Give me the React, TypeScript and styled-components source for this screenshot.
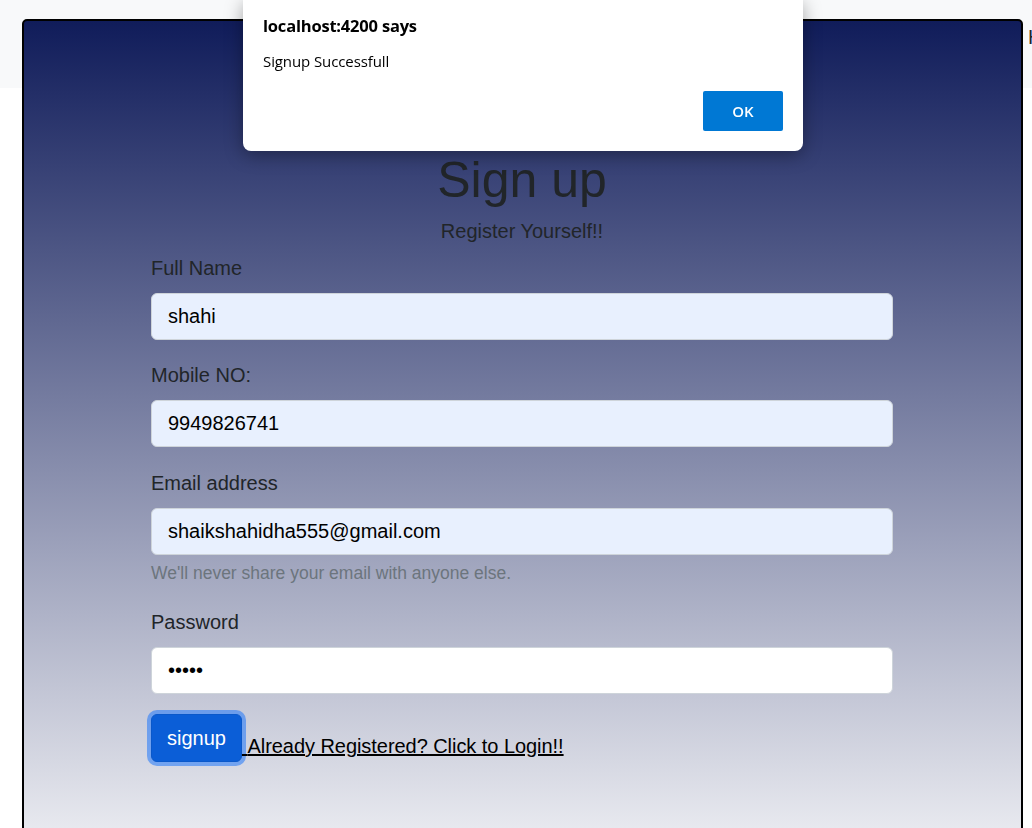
import React, { useState } from 'react';
import styled, { createGlobalStyle } from 'styled-components';

const GlobalStyle = createGlobalStyle`
  html, body {
    margin: 0;
    padding: 0;
  }
  body {
    font-family: "Liberation Sans", Arial, sans-serif;
    color: #212529;
    background: #fff;
  }
  * {
    box-sizing: border-box;
  }
`;

const Page = styled.div`
  display: flex;
  align-items: flex-start;
  height: 828px;
  overflow: hidden;
  padding: 19px 0 0 22px;
  background: linear-gradient(to bottom, #f8f9fa 0, #f8f9fa 88px, #fff 88px);
`;

const NavPeek = styled.span`
  margin: 3px 0 0 5px;
  font-size: 20px;
  line-height: 30px;
  color: #212529;
  white-space: nowrap;
`;

const Card = styled.div`
  flex: 0 0 1001px;
  height: 900px;
  border: 2px solid #000;
  border-radius: 5px;
  background: linear-gradient(to bottom, #101c5a 0%, #ffffff 100%);
  padding: 129px 1px 0 0;
  display: flex;
  justify-content: center;
`;

const Form = styled.form`
  width: 742px;
  display: flex;
  flex-direction: column;
`;

const Title = styled.h1`
  margin: 0;
  font-size: 50px;
  font-weight: 400;
  line-height: 60px;
  text-align: center;
  color: #212529;
`;

const Subtitle = styled.p`
  margin: 6px 0 7px;
  font-size: 20px;
  line-height: 30px;
  text-align: center;
  color: #212529;
`;

const Group = styled.div<{ $gap?: number }>`
  display: flex;
  flex-direction: column;
  margin-bottom: ${(p) => p.$gap ?? 20}px;
`;

const Label = styled.label`
  font-size: 20px;
  line-height: 30px;
  margin-bottom: 10px;
  color: #212529;
`;

const Input = styled.input<{ $filled?: boolean }>`
  height: 47px;
  width: 100%;
  padding: 0 16px;
  font-family: "Liberation Sans", Arial, sans-serif;
  font-size: 20px;
  color: #000;
  border: 1px solid #ced4da;
  border-radius: 6px;
  background: ${(p) => (p.$filled ? '#e8f0fe' : '#fff')};
  outline: none;
`;

const HelpText = styled.div`
  margin: 5px 0 1px;
  font-size: 17.5px;
  line-height: 26px;
  color: #6c757d;
`;

const Actions = styled.div`
  display: flex;
  align-items: flex-end;
`;

const SubmitButton = styled.button`
  height: 48px;
  padding: 0 15px;
  font-family: "Liberation Sans", Arial, sans-serif;
  font-size: 20px;
  color: #fff;
  background: #0b5ed7;
  border: 1px solid #0a58ca;
  border-radius: 6px;
  box-shadow: 0 0 0 4px rgba(13, 110, 253, 0.5);
  cursor: pointer;
`;

const LoginLink = styled.a`
  font-size: 20px;
  line-height: 30px;
  margin-bottom: 1px;
  color: #000;
  text-decoration: underline;
  white-space: nowrap;
  letter-spacing: -0.05px;
`;

const Dialog = styled.div`
  position: fixed;
  top: 0;
  left: 243px;
  width: 560px;
  height: 151px;
  padding: 14px 20px 20px;
  background: #fff;
  border-radius: 0 0 8px 8px;
  box-shadow: 0 4px 18px rgba(0, 0, 0, 0.35);
  font-family: "Open Sans", "Noto Sans", sans-serif;
  display: flex;
  flex-direction: column;
`;

const DialogTitle = styled.div`
  font-size: 16.5px;
  font-weight: 700;
  line-height: 24px;
  letter-spacing: -0.2px;
  color: #000;
`;

const DialogMessage = styled.div`
  margin-top: 12px;
  font-size: 15px;
  line-height: 22px;
  letter-spacing: -0.1px;
  color: #000;
`;

const DialogFooter = styled.div`
  margin-top: auto;
  display: flex;
  justify-content: flex-end;
`;

const OkButton = styled.button`
  width: 80px;
  height: 40px;
  border: none;
  border-radius: 2px;
  background: #0078d4;
  color: #fff;
  font-family: "Open Sans", "Noto Sans", sans-serif;
  font-size: 15px;
  font-weight: 600;
  cursor: pointer;
`;

const App = () => {
  const [name, setName] = useState('shahi');
  const [mobile, setMobile] = useState('9949826741');
  const [email, setEmail] = useState('shaikshahidha555@gmail.com');
  const [password, setPassword] = useState('12345');

  return (
    <>
      <GlobalStyle />
      <Page>
        <Card>
          <Form onSubmit={(e) => e.preventDefault()}>
            <Title>Sign up</Title>
            <Subtitle>Register Yourself!!</Subtitle>
            <Group>
              <Label htmlFor="name">Full Name</Label>
              <Input id="name" $filled value={name} onChange={(e) => setName(e.target.value)} />
            </Group>
            <Group $gap={21}>
              <Label htmlFor="mobile">Mobile NO:</Label>
              <Input id="mobile" $filled value={mobile} onChange={(e) => setMobile(e.target.value)} />
            </Group>
            <Group>
              <Label htmlFor="email">Email address</Label>
              <Input
                id="email"
                type="email"
                $filled
                value={email}
                onChange={(e) => setEmail(e.target.value)}
              />
              <HelpText>We'll never share your email with anyone else.</HelpText>
            </Group>
            <Group>
              <Label htmlFor="password">Password</Label>
              <Input
                id="password"
                type="password"
                value={password}
                onChange={(e) => setPassword(e.target.value)}
              />
            </Group>
            <Actions>
              <SubmitButton type="submit">signup</SubmitButton>
              <LoginLink href="#">{'\u00a0'}Already Registered? Click to Login!!</LoginLink>
            </Actions>
          </Form>
        </Card>
        <NavPeek>H</NavPeek>
      </Page>
      <Dialog role="alertdialog">
        <DialogTitle>localhost:4200 says</DialogTitle>
        <DialogMessage>Signup Successfull</DialogMessage>
        <DialogFooter>
          <OkButton>OK</OkButton>
        </DialogFooter>
      </Dialog>
    </>
  );
};

export default App;
